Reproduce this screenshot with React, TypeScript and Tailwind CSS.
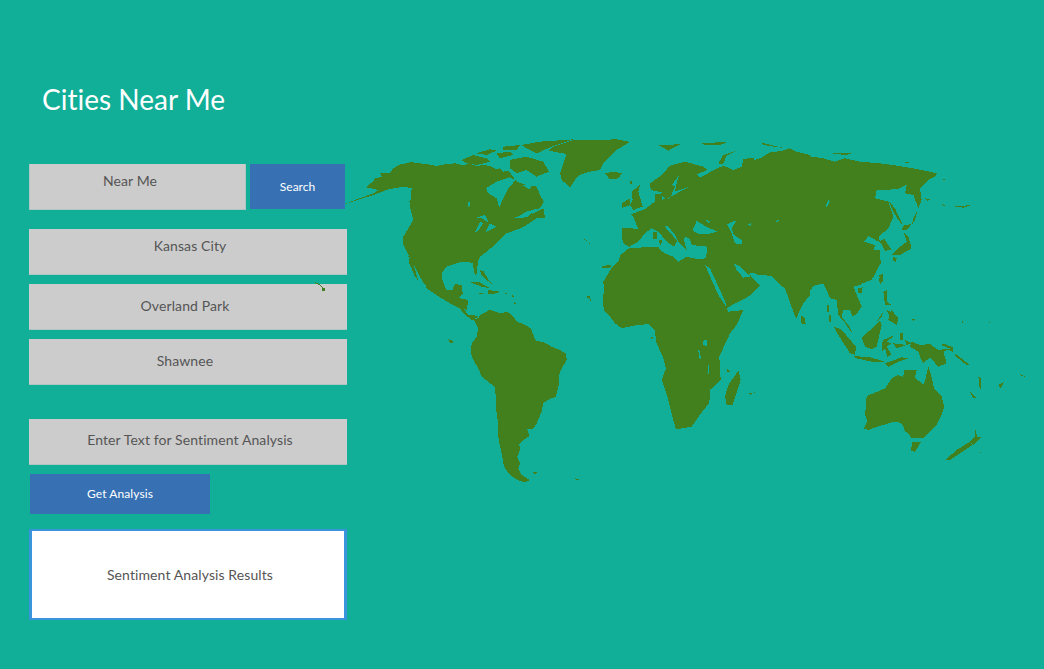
import React from "react";

type Region = { x: number; y: number; land?: string[]; sea?: string[] };

const regions: Region[] = [
  {
    x: 340, y: 130,
    land: [
      "15,222 50,208 100,190 115,180 80,172 92,160 105,150 100,147 125,140 120,130 150,128 160,115 175,105 215,96 235,100 260,102 290,108 320,102 345,100 365,105 390,102 410,108 430,105 450,108 470,118 480,115 490,125 505,122 515,135 530,155 560,165 590,170 600,195 612,215 600,235 560,245 525,265 575,250 590,265 560,285 540,295 500,310 485,325 470,340 440,365 420,380 415,390 412,410 410,432 405,435 398,400 380,395 365,395 340,403 320,410 308,425 305,440 312,465 320,480 345,482 345,465 365,465 368,490 355,505 385,510 380,540 360,535 340,522 320,510 280,490 255,465 240,440 222,405 205,375 190,345 190,320 205,295 220,270 215,250 210,230 215,175 190,170 145,178 100,195",
      "870,36 830,28 760,30 700,30 640,50 625,62 680,72 670,100 660,130 665,150 690,172 705,150 720,135 750,125 780,120 790,100 800,90 830,60",
      "795,130 820,125 845,130 835,145 810,148",
      "365,90 400,75 440,85 450,95 410,105 380,100",
      "408,70 450,58 470,62 440,75",
      "545,45 600,35 700,28 640,48 590,70 560,55",
      "510,90 560,80 610,95 627,125 590,140 560,120 530,130 510,115",
      "490,50 540,45 530,60 490,60",
      "470,70 510,65 520,75 480,85",
      "205,378 218,395 235,452 225,440 208,400",
      "580,250 610,235 615,265 580,265",
      "340,155 365,152 360,162 342,165",
      "208,212 216,210 216,232 210,230",
      "732,328 742,330 740,334",
      "748,338 753,342 749,345",
      "787,408 815,405 808,415 790,414",
      "740,497 748,497 750,503 742,503",
      "748,505 755,507 752,514",
      "420,420 432,425 445,450 460,465 440,450 425,435",
    ],
    sea: [
      "438,175 470,155 510,142 527,150 505,175 490,205 478,232 470,205 445,190",
      "405,265 435,255 447,278 425,265",
      "420,275 430,280 412,305 405,305",
      "450,280 470,290 435,308",
      "520,265 590,235 560,262",
      "385,215 390,215 388,232 384,230",
      "545,165 575,165 570,178",
      "525,148 560,135 600,145 575,155",
    ],
  },
  {
    x: 400, y: 280,
    land: [
      "70,0 80,25 125,55 150,70 180,85 190,100 215,120 235,110 220,105 205,105 190,85 200,70 205,60 180,55 165,35 185,15 165,12 155,35 125,25 125,0",
      "205,5 235,5 270,25 245,20",
      "265,30 300,35 285,41 265,41",
      "235,38 250,38 250,42 237,42",
      "315,38 322,40 318,44",
      "335,42 342,50 338,52",
      "342,62 348,72 344,76",
    ],
  },
  {
    x: 590, y: 135,
    land: [
      "95,280 105,278 145,282 130,245 122,238 165,222 195,200 195,178 212,178 215,172 205,170 182,165 180,145 215,120 240,92 285,80 340,95 352,105 320,118 330,128 372,105 400,92 430,105 455,95 460,72 490,68 495,80 540,52 600,45 660,60 660,480 640,505 618,550 610,530 585,460 570,450 540,420 505,420 485,412 482,425 510,450 480,482 412,518 345,395 352,335 305,330 300,312 280,308 290,345 265,320 255,300 235,275 222,272 262,318 252,335 232,322 205,290 185,280 165,295 145,320 118,335 100,325 95,305",
      "118,340 150,338 175,335 205,335 210,345 225,355 250,365 265,380 290,365 320,372 350,370 345,392 410,515 415,530 460,525 440,570 420,595 388,665 392,735 360,765 358,805 340,825 305,875 258,883 250,855 232,785 215,735 228,700 220,670 198,620 195,585 175,567 130,572 95,580 75,565 60,545 42,525 38,498 42,465 40,440 52,420 65,398 85,378 92,360 110,345",
      "125,170 150,150 145,170 158,215 130,225 120,210 128,195",
      "97,205 118,190 122,210 97,218",
      "45,115 70,110 95,115 85,128 60,133",
      "205,30 270,28 235,47",
      "335,25 415,20 390,30 345,30",
      "385,85 400,60 445,45 410,62 400,85 390,88",
      "120,138 126,138 126,146 120,146",
      "36,393 60,390 52,400 38,400",
      "205,315 218,315 212,332",
      "190,292 200,292 200,312 190,312",
    ],
    sea: [
      "270,118 245,150 255,155 240,190 225,195 270,170 300,155 255,170 262,135",
      "308,285 320,258 340,270 360,280 382,290 350,298 320,295",
      "345,255 360,258 355,265",
      "412,268 440,255 425,280 432,300 455,315 455,328 435,325 425,295",
      "472,268 482,265 482,272",
      "432,385 450,395 475,420 485,410 480,425 460,428 440,405",
      "345,390 360,400 405,498 410,518 385,480",
      "410,520 480,515 455,525 415,530",
      "285,305 300,312 290,325",
      "555,258 570,255 560,262",
      "215,178 225,192 215,195",
    ],
  },
  {
    x: 680, y: 130,
    land: [
      "190,100 225,90 280,70 330,55 365,75 430,85 465,95 495,85 540,95 600,100 640,105 700,115 772,130 765,140 745,150 720,175 725,210 715,235 700,195 675,190 680,165 650,178 590,180 585,205 625,215 640,260 625,295 595,320 600,335 612,325 635,360 615,362 600,335 590,332 565,318 553,335 585,345 580,365 600,400 580,440 540,465 520,470 500,490 460,490 430,460 400,465 365,510 340,540 318,470 300,465 280,440 225,430 225,200",
      "625,212 645,235 668,285 655,270 640,245",
      "712,240 705,270 695,285 700,265",
      "670,287 695,282 680,300 665,300",
      "670,305 685,320 695,355 660,375 635,375 660,350 680,335",
      "640,380 650,385 648,396 640,392",
      "600,435 607,440 602,462 597,455",
      "450,68 520,68 500,75 465,72",
      "245,38 315,55 250,45",
      "68,40 145,36 100,46",
      "672,95 690,96 680,100",
      "785,145 797,148 790,150",
      "735,205 755,210 740,212",
      "785,222 800,228 790,228",
      "820,230 875,225 850,233",
      "535,475 548,472 545,488 535,488",
    ],
    sea: ["445,208 450,215 440,232 437,230"],
  },
  {
    x: 770, y: 250,
    land: [
      "0,75 0,0 330,0 332,40 305,90 272,102 250,110 275,170 262,190 248,200 240,180 220,180 215,200 240,232 248,252 222,215 205,195 200,150 180,145 170,120 160,100 130,108 100,150 80,205 70,185 45,110",
      "95,195 105,205 107,222 95,222 92,205",
      "190,228 215,240 258,290 255,315 240,310 205,255",
      "250,318 300,322 345,335 305,335 260,325",
      "345,340 395,322 415,325 385,335 355,350",
      "330,212 335,225 320,290 305,298 285,290 275,265 295,245",
      "340,270 375,255 350,275 365,280 350,290 365,315 352,320 345,295 337,305 335,285",
      "340,125 350,120 350,155 365,165 345,165",
      "365,180 385,205 380,225 355,210",
      "350,180 362,185 360,200",
      "320,215 340,185 335,200",
      "425,275 450,285 480,282 505,300 545,295 520,305 530,340 505,350 480,322 460,340 450,320 445,305 420,290",
      "390,250 398,250 398,270 390,270",
      "405,270 425,280 410,285",
      "370,280 410,285 380,295",
      "510,285 525,282 548,292 548,305 535,300 540,295",
      "555,310 600,345 590,345 555,318",
      "328,75 338,72 340,95 330,98",
      "172,165 176,165 176,185 172,185",
      "178,195 182,195 182,215 178,215",
      "425,205 435,208 430,212",
      "575,212 580,212 578,218",
    ],
  },
  {
    x: 760, y: 290,
    land: [
      "312,415 322,395 315,375 318,345 320,318 345,308 375,295 395,265 415,255 430,262 432,240 470,240 465,262 490,285 497,265 505,228 515,262 522,295 545,320 553,350 545,375 530,405 510,425 490,445 455,445 445,430 435,425 428,405 415,395 390,398 370,405 345,412 325,420",
      "457,455 482,457 465,485 453,482",
      "555,510 590,480 630,455 638,465 600,490 570,510",
      "645,415 652,440 665,440 640,465 630,455 645,440",
      "630,305 650,325 640,325",
      "715,285 733,275 722,295",
      "655,260 662,265 664,300 658,290",
      "780,252 795,260 785,258",
      "605,95 610,95 608,100",
      "686,96 691,96 689,100",
      "660,485 665,485 663,492",
    ],
  },
  {
    x: 430, y: 300,
    land: [
      "130,58 145,55 150,45 165,38 180,28 195,35 215,40 232,35 245,45 262,65 285,75 302,85 310,105 318,122 345,128 365,140 385,148 408,160 410,180 398,200 388,222 386,255 378,290 352,300 340,310 335,335 320,370 308,388 292,388 298,408 280,420 268,432 270,450 262,470 270,490 265,505 275,525 300,540 285,548 262,540 240,525 222,500 215,460 208,430 203,400 205,370 200,345 198,300 195,262 175,245 155,230 145,205 130,180 122,160 125,130 140,110 145,85",
      "925,212 932,240 908,315 890,315 885,290 895,255",
      "305,516 325,516 315,522",
      "433,533 450,540 440,541",
      "55,118 68,122 70,130 60,130",
      "958,280 965,280 962,285",
      "970,275 975,275 973,280",
      "890,205 905,218 892,215",
      "662,112 668,112 666,120",
    ],
    sea: [
      "820,122 832,120 830,138 820,135",
      "805,150 808,150 813,176 808,175",
      "835,195 838,195 838,222 834,220",
    ],
  },
];

function WorldMap() {
  return (
    <svg
      viewBox="0 0 1044 669"
      width={1044}
      height={669}
      shapeRendering="crispEdges"
      className="pointer-events-none absolute left-0 top-0"
    >
      {regions.map((r, i) => (
        <g key={i} transform={`translate(${r.x} ${r.y}) scale(0.33333)`} fill="#41801c">
          {r.land?.map((p, j) => <polygon key={j} points={p} />)}
        </g>
      ))}
      {regions.map((r, i) => (
        <g key={i} transform={`translate(${r.x} ${r.y}) scale(0.33333)`} fill="#11ae98">
          {r.sea?.map((p, j) => <polygon key={j} points={p} />)}
        </g>
      ))}
      <path d="M315 282.5 L320 285 L323.5 289" stroke="#41801c" strokeWidth="1" fill="none" />
      <rect x="322" y="288" width="3" height="3" fill="#41801c" />
    </svg>
  );
}

const rowClass =
  "flex h-[46px] w-[318px] bg-[#cccccc] border-b border-[#adc6c1] text-[14px] tracking-[0.1px] text-[#555555]";

export default function App() {
  return (
    <div className="relative h-[669px] w-[1044px] overflow-hidden bg-[#11ae98] pl-[29px] pt-[80px] font-[Lato,sans-serif] [font-variant-ligatures:none]">
      <h1 className="ml-[13px] h-[40px] text-[28px] leading-[38px] font-normal text-white">Cities Near Me</h1>

      <div className="mt-[44px] flex h-[46px] items-start gap-[4px]">
        <div className="flex h-[46px] w-[217px] justify-center border-x border-b border-[#adc6c1] bg-[#cccccc] pr-[15px] pt-[6px] text-[14px] tracking-[0.1px] text-[#555555]">
          Near Me
        </div>
        <button className="h-[45px] w-[95px] bg-[#3771b4] text-[12px] text-white">Search</button>
      </div>

      <div className={`${rowClass} mt-[19px] justify-center pt-[6px] pl-[4px]`}>Kansas City</div>
      <div className={`${rowClass} mt-[9px] items-center justify-center pr-[6px] pb-[2px]`}>Overland Park</div>
      <div className={`${rowClass} mt-[9px] items-center justify-center pr-[6px] pb-[2px]`}>Shawnee</div>
      <div className={`${rowClass} mt-[34px] items-center justify-center pl-[4px] pb-[4px]`}>
        Enter Text for Sentiment Analysis
      </div>

      <button className="ml-[1px] mt-[9px] block h-[40px] w-[180px] bg-[#3771b4] text-[12px] tracking-[0.1px] text-white">
        Get Analysis
      </button>

      <div className="mt-[15px] flex h-[91px] w-[318px] items-center justify-center border-x-[3px] border-y-2 border-[#3a94dc] bg-white pl-[4px] pb-[1px] text-[14px] tracking-[0.1px] text-[#555555]">
        Sentiment Analysis Results
      </div>

      <WorldMap />
    </div>
  );
}
